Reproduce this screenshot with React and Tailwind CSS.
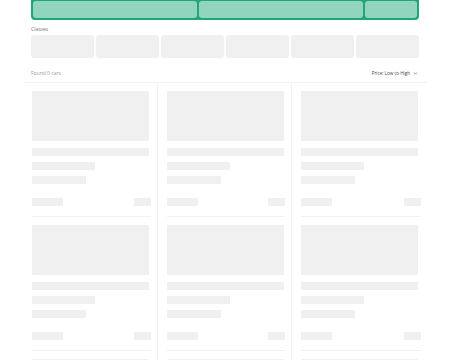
import { ChevronDown } from 'lucide-react'

const SEGMENTS = ['w-[164px]', 'w-[164px]', 'flex-1']
const CHIPS = [0, 1, 2, 3, 4, 5]
const CARDS = [0, 1, 2, 3, 4, 5, 6, 7, 8]

function SkeletonCard({ last }) {
  return (
    <div className={`${last ? '' : 'border-r border-[#f3f3f3]'} pl-[9px] pr-[6px] pt-[8px]`}>
      <div className="border-b border-[#f1f1f1] pb-[10px]">
        <div className="h-[50px] w-[117px] rounded-[1px] bg-[#f0f0f0]" />
        <div className="mt-[7px] h-[8px] w-[117px] bg-[#f0f0f0]" />
        <div className="mt-[6px] h-[8px] w-[63px] bg-[#f0f0f0]" />
        <div className="mt-[6px] h-[8px] w-[54px] bg-[#f0f0f0]" />
        <div className="mt-[14px] flex justify-between">
          <div className="h-[8px] w-[31px] bg-[#f0f0f0]" />
          <div className="h-[8px] w-[17px] bg-[#f0f0f0]" />
        </div>
      </div>
    </div>
  )
}

export default function App() {
  return (
    <div className="h-[360px] w-[450px] overflow-hidden bg-white font-['Open_Sans',sans-serif]">
      <div className="mx-auto w-[388px]">
        {/* Step bar */}
        <div className="flex h-[20px] gap-[2px] rounded-b-[4px] bg-[#22a57b] px-[2px] pb-[2px] pt-[1px]">
          {SEGMENTS.map((w, i) => (
            <div key={i} className={`${w} rounded-[3px] bg-[#92d5bf]`} />
          ))}
        </div>

        <p className="mt-[6px] text-[5px] leading-[6px] text-[#777]">Classes</p>
        <div className="mt-[3px] flex gap-[2px]">
          {CHIPS.map(i => (
            <div key={i} className="h-[23px] w-[63px] rounded-[3px] bg-[#f0f0f0]" />
          ))}
        </div>

        <div className="mt-[12px] flex items-center justify-between text-[5px] leading-[6px]">
          <span className="text-[#9a9a9a]">Found 0 cars</span>
          <span className="flex items-center gap-[3px] pr-[1px] text-[4.6px] text-[#444]">
            Price: Low to High
            <ChevronDown size={5} strokeWidth={3} className="text-[#555]" />
          </span>
        </div>

        <div className="-mx-[8px] mt-[6px] grid grid-cols-3 border-t border-[#f3f3f3]">
          {CARDS.map(i => <SkeletonCard key={i} last={i % 3 === 2} />)}
        </div>
      </div>
    </div>
  )
}
